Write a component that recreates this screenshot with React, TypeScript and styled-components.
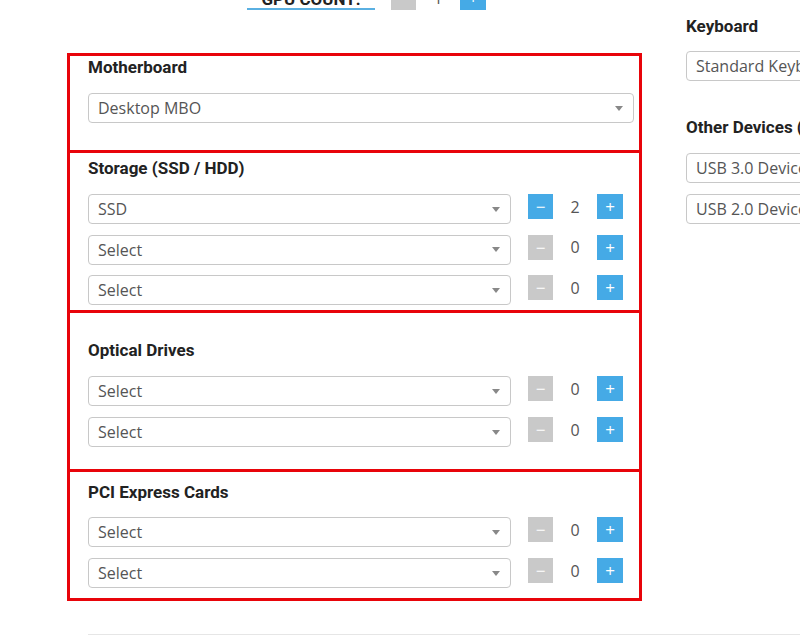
import React from "react";
import styled, { createGlobalStyle } from "styled-components";

const GlobalStyle = createGlobalStyle`
  html, body { margin: 0; padding: 0; background: #fff; overflow: hidden; }
  body { width: 800px; height: 635px; font-family: "Open Sans", "Liberation Sans", sans-serif; }
  * { box-sizing: border-box; }
`;

const Page = styled.div`
  display: flex;
  align-items: flex-start;
  width: 800px;
  height: 635px;
  overflow: hidden;
`;

const LeftCol = styled.div`
  width: 575px;
  margin-left: 67px;
  margin-top: -15px;
  flex-shrink: 0;
`;

const RightCol = styled.div`
  width: 320px;
  flex-shrink: 0;
  margin-left: 44px;
  padding-top: 16px;
`;

const GpuRow = styled.div`
  display: flex;
  align-items: flex-end;
  height: 25px;
  padding-left: 180px;
  gap: 16px;
`;

const GpuLabel = styled.div`
  width: 128px;
  padding: 0 6px;
  border-bottom: 2px solid #5ab0e2;
  font-family: Roboto, "Liberation Sans", sans-serif;
  font-weight: 700;
  font-size: 17px;
  line-height: 18px;
  color: #222;
  text-transform: uppercase;
  white-space: nowrap;
  text-align: center;
`;

const Section = styled.section<{ $pt: number; $pb: number; $first?: boolean }>`
  border: 3px solid #e8040a;
  margin-top: ${(p) => (p.$first ? "43px" : "-3px")};
  padding: ${(p) => p.$pt}px 5px ${(p) => p.$pb}px 18px;
`;

const Heading = styled.h3<{ $mb?: number; $mt?: number }>`
  margin: ${(p) => p.$mt ?? 0}px 0 ${(p) => p.$mb ?? 16}px 0;
  font-family: Roboto, "Liberation Sans", sans-serif;
  font-weight: 700;
  font-size: 17px;
  line-height: 20px;
  color: #222;
  white-space: nowrap;
`;

const Rows = styled.div<{ $gap?: number }>`
  display: flex;
  flex-direction: column;
  gap: ${(p) => p.$gap ?? 11}px;
`;

const Row = styled.div`
  display: flex;
  align-items: flex-start;
  gap: 17px;
  padding-right: 11px;
`;

const SelectBox = styled.div<{ $w?: number }>`
  flex: ${(p) => (p.$w ? "none" : "1 1 0")};
  min-width: 0;
  width: ${(p) => (p.$w ? `${p.$w}px` : "auto")};
  height: 30px;
  border: 1px solid #c8c8c8;
  border-radius: 4px;
  background: #fff;
  display: flex;
  align-items: center;
  padding: 0 10px 0 9px;
  font-family: "Open Sans", "Liberation Sans", sans-serif;
  font-size: 16px;
  color: #555;
  white-space: nowrap;
  overflow: hidden;
`;

const SelectText = styled.span`
  flex: 1;
`;

const Caret = styled.span`
  width: 0;
  height: 0;
  border-left: 4px solid transparent;
  border-right: 4px solid transparent;
  border-top: 5px solid #888;
`;

const Counter = styled.div`
  display: flex;
  height: 25px;
  flex-shrink: 0;
`;

const CounterBtn = styled.div<{ $active: boolean; $w: number }>`
  width: ${(p) => p.$w}px;
  height: 25px;
  background: ${(p) => (p.$active ? "#45aae6" : "#c9c9c9")};
  color: #fff;
  display: flex;
  align-items: center;
  justify-content: center;
  font-family: "Open Sans", "Liberation Sans", sans-serif;
  font-size: 17px;
  line-height: 1;
`;

const CounterValue = styled.div`
  width: 44px;
  height: 25px;
  background: #fff;
  color: #555;
  display: flex;
  align-items: center;
  justify-content: center;
  font-family: "Open Sans", "Liberation Sans", sans-serif;
  font-size: 16px;
`;

const Divider = styled.div`
  margin: 33px 0 0 21px;
  width: 800px;
  border-top: 1px solid #e6e6e6;
`;

const Select = ({ value, width, caret = true }: { value: string; width?: number; caret?: boolean }) => (
  <SelectBox $w={width}>
    <SelectText>{value}</SelectText>
    {caret && <Caret />}
  </SelectBox>
);

const Stepper = ({ value, min = 0 }: { value: number; min?: number }) => (
  <Counter>
    <CounterBtn $active={value > min} $w={25}>−</CounterBtn>
    <CounterValue>{value}</CounterValue>
    <CounterBtn $active $w={26}>+</CounterBtn>
  </Counter>
);

const ItemRow = ({ value, count }: { value: string; count: number }) => (
  <Row>
    <Select value={value} />
    <Stepper value={count} />
  </Row>
);

export default function App() {
  return (
    <>
      <GlobalStyle />
      <Page>
        <LeftCol>
          <GpuRow>
            <GpuLabel>GPU Count:</GpuLabel>
            <Stepper value={1} min={1} />
          </GpuRow>

          <Section $first $pt={1} $pb={27}>
            <Heading>Motherboard</Heading>
            <Select value="Desktop MBO" />
          </Section>

          <Section $pt={5} $pb={5}>
            <Heading>Storage (SSD / HDD)</Heading>
            <Rows $gap={10.5}>
              <ItemRow value="SSD" count={2} />
              <ItemRow value="Select" count={0} />
              <ItemRow value="Select" count={0} />
            </Rows>
          </Section>

          <Section $pt={27} $pb={22}>
            <Heading>Optical Drives</Heading>
            <Rows>
              <ItemRow value="Select" count={0} />
              <ItemRow value="Select" count={0} />
            </Rows>
          </Section>

          <Section $pt={10} $pb={10}>
            <Heading $mb={15}>PCI Express Cards</Heading>
            <Rows>
              <ItemRow value="Select" count={0} />
              <ItemRow value="Select" count={0} />
            </Rows>
          </Section>

          <Divider />
        </LeftCol>

        <RightCol>
          <Heading $mb={15}>Keyboard</Heading>
          <Select value="Standard Keyboard" width={300} caret={false} />
          <Heading $mb={16} $mt={36}>Other Devices (Optional)</Heading>
          <Rows>
            <Select value="USB 3.0 Device" width={300} caret={false} />
            <Select value="USB 2.0 Device" width={300} caret={false} />
          </Rows>
        </RightCol>
      </Page>
    </>
  );
}
